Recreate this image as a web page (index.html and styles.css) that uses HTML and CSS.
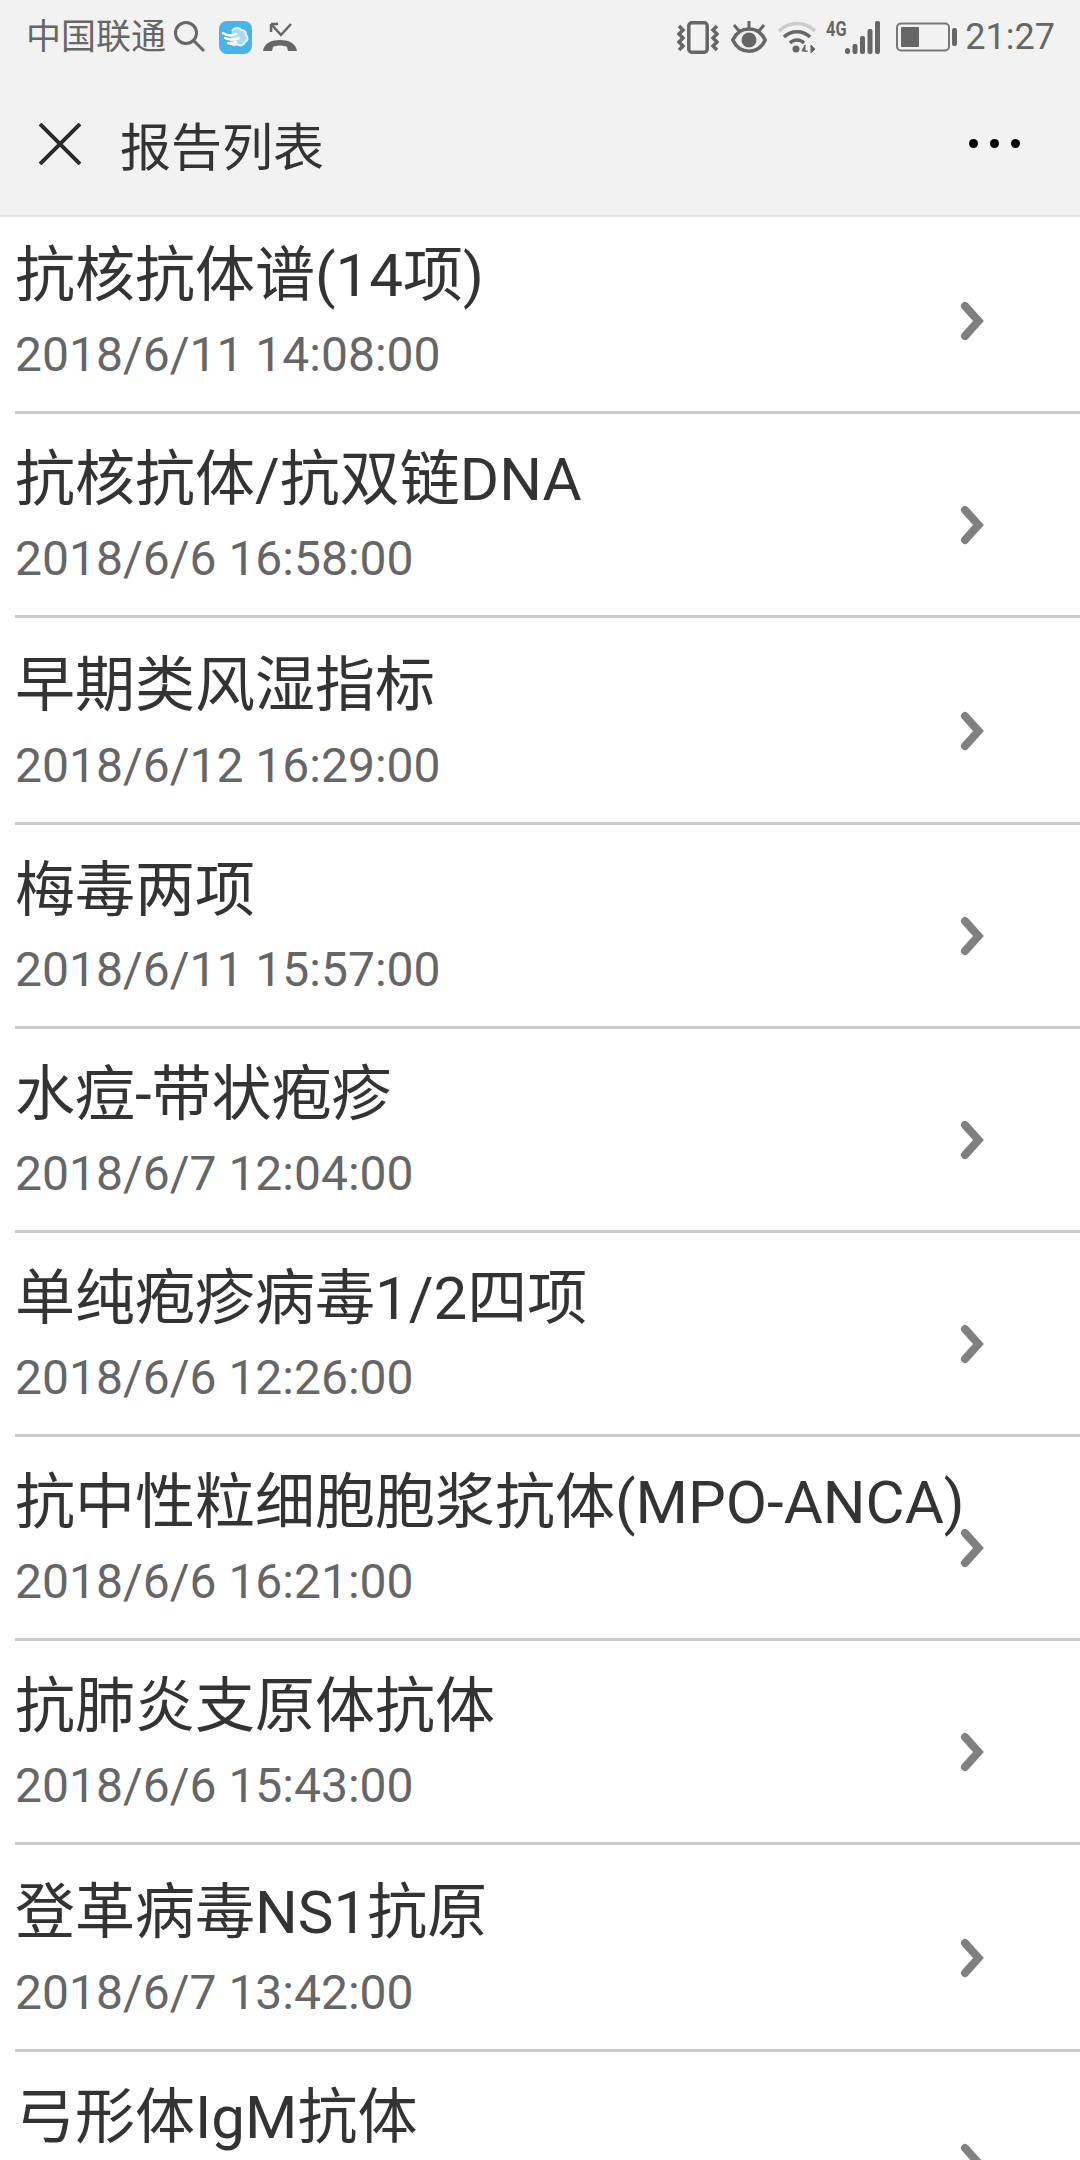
FILE: index.html
```html
<!DOCTYPE html>
<html lang="zh-CN">
<head>
  <meta charset="UTF-8" />
  <meta name="viewport" content="width=device-width, initial-scale=1.0"/>
  <title>报告列表</title>
  <link rel="stylesheet" href="styles.css">
</head>
<body>

  <!-- Status bar -->
  <div class="status-bar">
    <div class="status-left">
      <span class="carrier">中国联通</span>
      <svg class="icon-search" width="32" height="34" viewBox="0 0 32 34"><circle cx="12" cy="13" r="10.500" fill="none" stroke="#666" stroke-width="3"/><path d="M20 21 L30 31" stroke="#666" stroke-width="3" fill="none"/></svg>
      <svg class="icon-app" width="33" height="33" viewBox="0 0 33 33">
        <rect width="33" height="33" rx="8" fill="#4ab3ea"/>
        <path d="M13 10 C15 6.500 20 6 22 9 C25 8.500 27.500 11 27 14 C29.500 16 29 20 26 21 C25 24.500 20 25.500 18 23 C15.500 24.500 12 24 11 22" fill="#a8dcf6" stroke="#e8f6fd" stroke-width="2"/>
        <path d="M4 12 C8 15 13 15 17 13 M6 17 C10 19 15 19 20 17 M9 22 C12 23 15 22 17 21" fill="none" stroke="#fff" stroke-width="2.500" stroke-linecap="round"/>
      </svg>
      <svg class="icon-missed" width="34" height="30" viewBox="0 0 34 30"><path d="M8 2 L18 13 L28 2 M8 2 H15 M8 2 V10" fill="none" stroke="#666" stroke-width="2.500"/><path d="M0 29 C1 21 9 18 17 18 C25 18 33 21 34 29 L25 29 L24 25 C20 23 14 23 10 25 L9 29 Z" fill="#666"/></svg>
    </div>
    <div class="status-right">
      <svg width="42" height="33" viewBox="0 0 42 33"><rect x="11.800" y="1.800" width="18.400" height="29.400" rx="3" fill="none" stroke="#666" stroke-width="3.500"/><path d="M2 5 L6 9 L2 13 L6 17 L2 21 L6 25 L2 29 M40 5 L36 9 L40 13 L36 17 L40 21 L36 25 L40 29" fill="none" stroke="#666" stroke-width="3.500"/></svg>
      <svg class="icon-eye" width="36" height="32" viewBox="0 0 36 32"><path d="M1.800 19 C6 10 12 8 18 8 C24 8 30 10 34.200 19 C30 28 24 30.200 18 30.200 C12 30.200 6 28 1.800 19 Z" fill="none" stroke="#666" stroke-width="3.500"/><circle cx="18" cy="19" r="7.500" fill="#666"/><path d="M18 0 V7 M3 4 L8 10 M33 4 L28 10" stroke="#666" stroke-width="3" fill="none"/></svg>
      <svg class="icon-wifi" width="40" height="33" viewBox="0 0 40 33"><path d="M2 10 C12 0 28 0 38 10" fill="none" stroke="#ccc" stroke-width="3.500"/><path d="M7 16 C14 9 26 9 33 16" fill="none" stroke="#666" stroke-width="3.500"/><path d="M13 22 C17 18 23 18 27 22" fill="none" stroke="#666" stroke-width="3.500"/><circle cx="19" cy="28" r="3.500" fill="#666"/><path d="M28 31 V24 L25 30 H31 M34 24 V32 L38 28 Z" fill="#666" stroke="#666" stroke-width="1"/></svg>
      <div class="signal">
        <span class="net-type">4G</span>
        <svg width="35" height="33" viewBox="0 0 35 33"><g fill="#666"><rect x="0" y="27" width="5" height="6" rx="2.500"/><rect x="7.500" y="23" width="5" height="10" rx="2"/><rect x="15" y="15" width="5" height="18" rx="2"/><rect x="22.500" y="8" width="5" height="25" rx="2"/><rect x="30" y="0" width="5" height="33" rx="2"/></g></svg>
      </div>
      <svg class="icon-battery" width="62" height="30" viewBox="0 0 62 30"><rect x="1" y="1.500" width="52" height="27" rx="4" fill="none" stroke="#777" stroke-width="2"/><rect x="5" y="5" width="18" height="20" rx="1" fill="#666"/><rect x="56" y="6" width="5" height="18" rx="2" fill="#666"/></svg>
      <span class="clock">21:27</span>
    </div>
  </div>

  <!-- Nav bar -->
  <div class="nav-bar">
    <svg class="icon-close" width="42" height="42" viewBox="0 0 42 42"><path d="M1 1 L41 41 M41 1 L1 41" stroke="#2b2b2b" stroke-width="4" fill="none"/></svg>
    <span class="nav-title">报告列表</span>
    <div class="more"><i></i><i></i><i></i></div>
  </div>

  <!-- Report list -->
  <div class="report-list" id="report-list"></div>

  <script>
    // third value: the row's title line sits a little taller
    const reports = [
      ['抗核抗体谱(14项)', '2018/6/11 14:08:00'],
      ['抗核抗体/抗双链DNA', '2018/6/6 16:58:00'],
      ['早期类风湿指标', '2018/6/12 16:29:00', true],
      ['梅毒两项', '2018/6/11 15:57:00'],
      ['水痘-带状疱疹', '2018/6/7 12:04:00'],
      ['单纯疱疹病毒1/2四项', '2018/6/6 12:26:00'],
      ['抗中性粒细胞胞浆抗体(MPO-ANCA)', '2018/6/6 16:21:00'],
      ['抗肺炎支原体抗体', '2018/6/6 15:43:00'],
      ['登革病毒NS1抗原', '2018/6/7 13:42:00', true],
      ['弓形体IgM抗体', '']
    ];

    const list = document.getElementById('report-list');
    list.innerHTML = reports.map(r => `
      <div class="report-row${r[2] ? ' tall' : ''}">
        <div class="report-text">
          <div class="report-name">${r[0]}</div>
          <div class="report-date">${r[1]}</div>
        </div>
        <svg class="chevron" width="24" height="40" viewBox="0 0 24 40"><path d="M5 5 L18.500 20 L5 35" fill="none" stroke="#808080" stroke-width="8" stroke-linecap="round" stroke-linejoin="miter"/></svg>
      </div>`).join('');
  </script>
</body>
</html>
```

FILE: styles.css
```css
html, body {
  margin: 0;
  padding: 0;
}

body {
  width: 1080px;
  height: 2160px;
  overflow: hidden;
  background: #fff;
  font-family: Roboto, "Noto Sans CJK SC", sans-serif;
}

/* Status bar */
.status-bar {
  height: 72px;
  box-sizing: border-box;
  padding: 19px 25px 0 26px;
  display: flex;
  justify-content: space-between;
  align-items: flex-start;
  background: #f2f2f2;
  color: #666;
}

.status-left, .status-right {
  display: flex;
  align-items: center;
  height: 36px;
}

.carrier {
  font-size: 35px;
  line-height: 36px;
  margin-top: 2px;
}

.icon-search { margin-left: 8px; }
.icon-app { margin-left: 13px; }
.icon-missed { margin-left: 11px; }

.status-right svg { display: block; }
.icon-eye { margin-left: 12px; }
.icon-wifi { margin-left: 10px; }

.signal {
  display: flex;
  align-items: flex-end;
  height: 33px;
  margin-left: 9px;
}

.net-type {
  font-size: 21px;
  font-weight: 700;
  line-height: 16px;
  width: 19px;
  align-self: flex-start;
  transform: scaleX(0.78);
  transform-origin: left center;
}

.icon-battery { margin-left: 16px; }

.clock {
  font-size: 36px;
  line-height: 36px;
  margin-left: 7px;
}

/* Nav bar */
.nav-bar {
  height: 145px;
  box-sizing: border-box;
  border-bottom: 2px solid #e6e6e6;
  padding: 0 60px 0 39px;
  display: flex;
  align-items: center;
  background: #f2f2f2;
}

.nav-title {
  margin-left: 39px;
  font-size: 51px;
  color: #333;
  flex: 1;
}

.more {
  display: flex;
  gap: 12px;
}

.more i {
  display: block;
  width: 9px;
  height: 9px;
  border-radius: 50%;
  background: #000;
}

/* Report list: the first row starts slightly under the nav bar */
.report-list {
  margin-top: -7px;
}

.report-row {
  box-sizing: border-box;
  margin-left: 15px;
  padding: 24px 0 23px;
  border-bottom: 3px solid #ccc;
  display: flex;
  align-items: center;
}

.report-text {
  flex: 1;
  min-width: 0;
  white-space: nowrap;
}

.report-name {
  font-size: 60px;
  line-height: 84px;
  color: #333;
}

.report-date {
  font-size: 48px;
  line-height: 66px;
  height: 66px;
  margin-top: 4px;
  color: #666;
}

.tall .report-name {
  margin-top: 2px;
}

.tall .report-date {
  margin-top: 5px;
}

.chevron {
  flex: none;
  margin: 20px 96px 0 0;
}
```
